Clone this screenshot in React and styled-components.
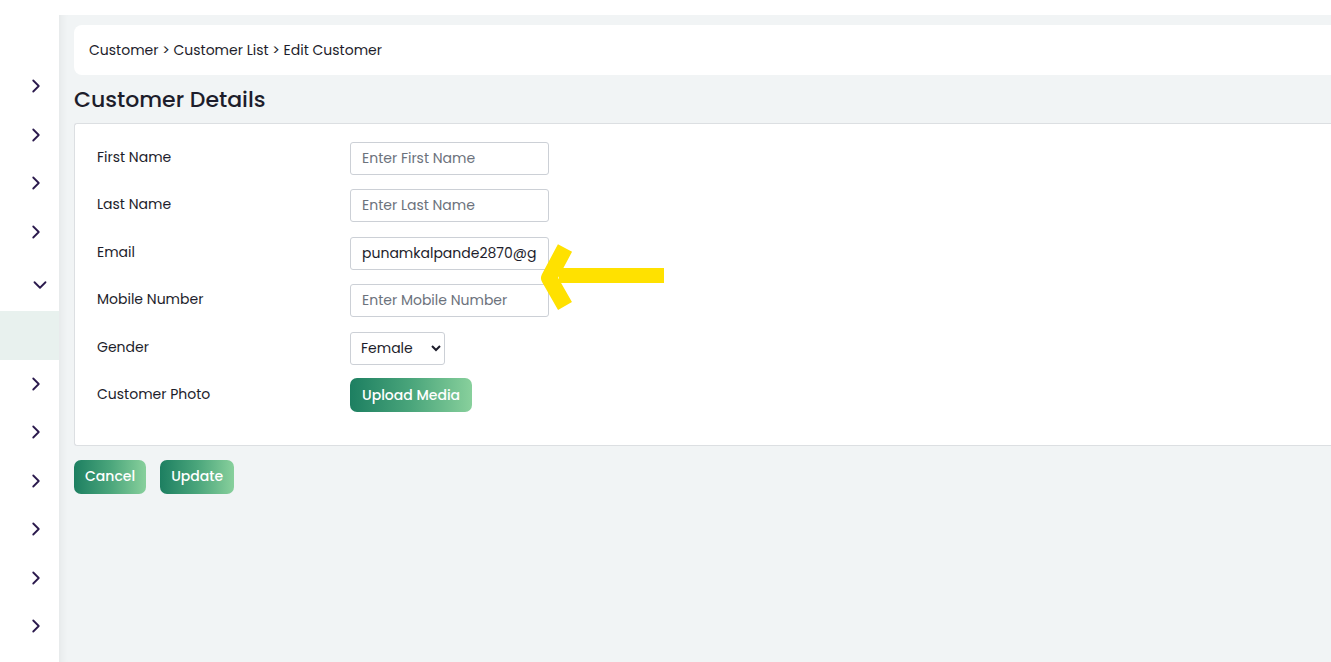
import styled, { createGlobalStyle } from "styled-components";
import { ChevronRight, ChevronDown } from "lucide-react";

const GlobalStyle = createGlobalStyle`
  html, body {
    margin: 0;
    padding: 0;
    background: #ffffff;
    font-family: "Poppins", "Open Sans", "Noto Sans", sans-serif;
    color: #1d1d2b;
  }
`;

const Shell = styled.div`
  display: flex;
  height: 662px;
  padding-top: 15px;
  box-sizing: border-box;
  overflow: hidden;
`;

const Sidebar = styled.nav`
  width: 59px;
  flex-shrink: 0;
  display: flex;
  flex-direction: column;
  padding-top: 47px;
`;

const NavItem = styled.div`
  height: ${(p) => (p.$open ? "55px" : "48.5px")};
  flex-shrink: 0;
  display: flex;
  align-items: center;
  padding-left: ${(p) => (p.$open ? "29px" : "25px")};
  padding-top: ${(p) => (p.$open ? "3px" : "0")};
  box-sizing: border-box;
  color: #2b1a4d;
  background: ${(p) => (p.$active ? "#e8f1ee" : "transparent")};
`;

const Main = styled.main`
  position: relative;
  flex: 1;
  background: #f1f4f5;
  box-shadow: inset 10px 0 8px -8px rgba(0, 0, 0, 0.06);
  padding: 10px 0 0 15px;
`;

const Breadcrumb = styled.div`
  background: #ffffff;
  border-radius: 8px 0 0 8px;
  height: 50px;
  display: flex;
  align-items: center;
  padding-left: 15px;
  font-size: 14px;
  color: #1d1d2b;
`;

const Title = styled.h2`
  margin: 11px 0 9px;
  font-size: 22px;
  font-weight: 500;
  line-height: 28px;
  color: #1d1d2b;
`;

const FormCard = styled.section`
  background: #ffffff;
  border: 1px solid #dcdfe2;
  border-right: none;
  border-radius: 3px 0 0 3px;
  padding: 18px 0 33px 22px;
  display: flex;
  flex-direction: column;
  gap: 14.4px;
`;

const Row = styled.div`
  display: flex;
  align-items: center;
  height: 33px;
`;

const Label = styled.label`
  width: 253px;
  font-size: 14px;
  color: #1d1d2b;
  margin-top: -2px;
`;

const TextInput = styled.input`
  width: 199px;
  height: 33px;
  box-sizing: border-box;
  border: 1px solid #ccd0d6;
  border-radius: 3px;
  padding: 0 11px;
  font-family: inherit;
  font-size: 14px;
  color: #1d1d2b;
  outline: none;

  &::placeholder {
    color: #6c727c;
  }
`;

const Select = styled.select`
  width: 95px;
  height: 33px;
  border: 1px solid #ccd0d6;
  border-radius: 3px;
  padding: 0 6px;
  font-family: inherit;
  font-size: 14px;
  color: #1d1d2b;
  background: #ffffff;
`;

const GradientButton = styled.button`
  height: 34px;
  padding: 0 ${(p) => (p.$wide ? "12px" : "11px")};
  border: none;
  border-radius: 7px;
  background: linear-gradient(90deg, #1d7f61 0%, #4aa57b 50%, #88d09c 100%);
  color: #ffffff;
  font-family: inherit;
  font-size: 14px;
  font-weight: 500;
  cursor: pointer;
`;

const Actions = styled.div`
  display: flex;
  gap: 14px;
  margin-top: 14px;
`;

const Marker = styled.svg`
  position: absolute;
  left: 478px;
  top: 225px;
  pointer-events: none;
`;

const fields = [
  { label: "First Name", placeholder: "Enter First Name" },
  { label: "Last Name", placeholder: "Enter Last Name" },
  { label: "Email", value: "punamkalpande2870@gmail.com" },
  { label: "Mobile Number", placeholder: "Enter Mobile Number" },
];

const navRows = [
  {}, {}, {}, {}, { open: true }, { active: true },
  {}, {}, {}, {}, {}, {},
];

export default function App() {
  return (
    <>
      <GlobalStyle />
      <Shell>
        <Sidebar>
          {navRows.map((r, i) => (
            <NavItem key={i} $active={r.active} $open={r.open}>
              {r.active ? null : r.open ? (
                <ChevronDown size={22} strokeWidth={2} />
              ) : (
                <ChevronRight size={22} strokeWidth={2} />
              )}
            </NavItem>
          ))}
        </Sidebar>

        <Main>
          <Breadcrumb>Customer &gt; Customer List &gt; Edit Customer</Breadcrumb>
          <Title>Customer Details</Title>

          <FormCard>
            {fields.map((f) => (
              <Row key={f.label}>
                <Label>{f.label}</Label>
                <TextInput
                  placeholder={f.placeholder}
                  defaultValue={f.value}
                />
              </Row>
            ))}
            <Row>
              <Label>Gender</Label>
              <Select defaultValue="Female">
                <option>Male</option>
                <option>Female</option>
                <option>Other</option>
              </Select>
            </Row>
            <Row>
              <Label>Customer Photo</Label>
              <GradientButton $wide>Upload Media</GradientButton>
            </Row>
          </FormCard>

          <Actions>
            <GradientButton>Cancel</GradientButton>
            <GradientButton>Update</GradientButton>
          </Actions>

          {/* highlighter arrow pointing at the email field */}
          <Marker width="134" height="72" viewBox="0 0 134 72">
            <rect x="22" y="28" width="105" height="15" fill="#ffe100" />
            <path
              d="M28 8 L12 38 L28 66"
              fill="none"
              stroke="#ffe100"
              strokeWidth="16"
              strokeLinejoin="round"
              strokeLinecap="butt"
            />
          </Marker>
        </Main>
      </Shell>
    </>
  );
}
